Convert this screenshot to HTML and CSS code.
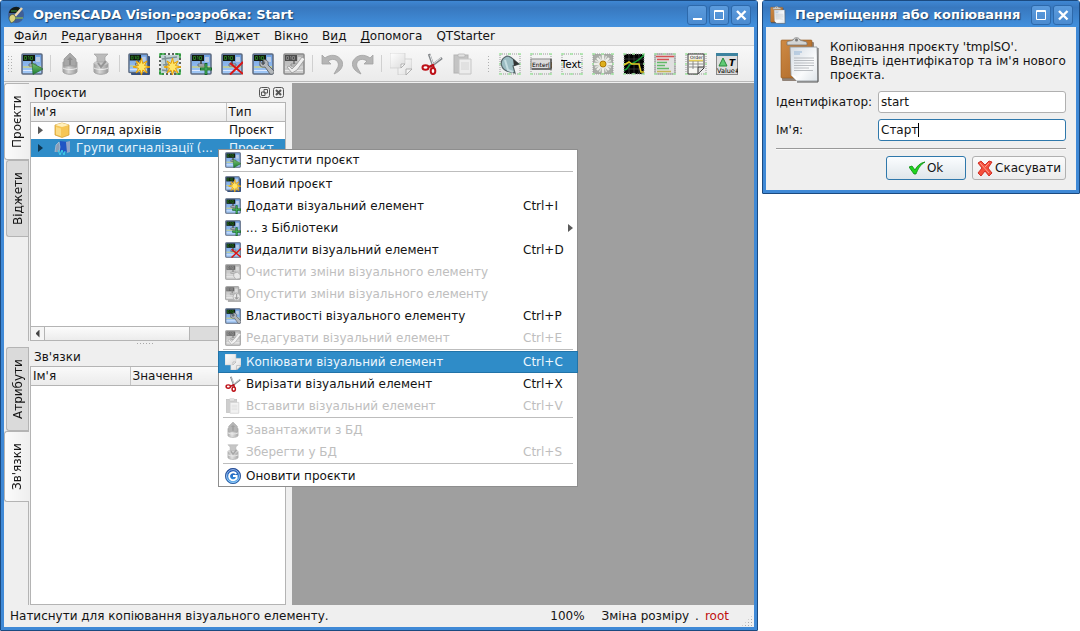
FILE: index.html
```html
<!DOCTYPE html>
<html lang="uk">
<head>
<meta charset="utf-8">
<title>OpenSCADA Vision</title>
<link rel="stylesheet" href="styles.css">
</head>
<body>
<svg class="defs" aria-hidden="true">
  <defs>
    <linearGradient id="g-scr" x1="0" y1="0" x2="0" y2="1"><stop offset="0" stop-color="#6f9fe0"/><stop offset="1" stop-color="#a4cbf8"/></linearGradient>
    <linearGradient id="g-green" x1="0" y1="0" x2="0" y2="1"><stop offset="0" stop-color="#7cc576"/><stop offset="1" stop-color="#1b7d30"/></linearGradient>
    <linearGradient id="g-metal" x1="0" y1="0" x2="1" y2="0"><stop offset="0" stop-color="#858585"/><stop offset=".4" stop-color="#d0d0d0"/><stop offset="1" stop-color="#7c7c7c"/></linearGradient>
    <linearGradient id="g-paper" x1="0" y1="0" x2="1" y2="1"><stop offset="0" stop-color="#fff"/><stop offset="1" stop-color="#dcdcdc"/></linearGradient>
    <linearGradient id="g-sheet" x1="0" y1="0" x2="1" y2="1"><stop offset="0" stop-color="#d3dbe3"/><stop offset=".6" stop-color="#fafbfc"/><stop offset="1" stop-color="#dde3e8"/></linearGradient>
    <linearGradient id="g-board" x1="0" y1="0" x2="1" y2="1"><stop offset="0" stop-color="#cf8a44"/><stop offset="1" stop-color="#a96526"/></linearGradient>
    <linearGradient id="g-blue" x1="0" y1="0" x2="0" y2="1"><stop offset="0" stop-color="#1547a8"/><stop offset="1" stop-color="#3fa4ee"/></linearGradient>
    <symbol id="screen" viewBox="0 0 22 22">
      <rect x="1" y="1" width="20" height="20" rx="1" fill="url(#g-scr)" stroke="#5c6a80" stroke-width="1.500"/>
      <path d="M2 14h18" stroke="#d8d76a" stroke-width="1.2"/>
      <path d="M2 17.500h18" stroke="#dfeaff" stroke-width="1"/>
      <path d="M10 8h2v5h-2z" fill="#555b61"/><path d="M8 11h7v2h-7z" fill="#c8cdd3" stroke="#4b5157" stroke-width=".7"/>
      <path d="M15 4h4v5h-4z" fill="#b9cbe4"/>
      <rect x="2" y="2" width="12" height="6" fill="#10180f"/>
      <path d="M3.500 3.500h2v3h-2zM7 3.500h1v3M9.500 3.500h2v3h-2z" stroke="#2c8a25" fill="none" stroke-width=".8"/>
    </symbol>
    <symbol id="run" viewBox="0 0 22 22"><use href="#screen"/><path d="M11 10l11 6-10 5.500z" fill="url(#g-green)" stroke="#2c6a35" stroke-width=".7"/></symbol>
    <symbol id="star" viewBox="0 0 22 22"><path d="M13.500 5l1.200 5.500L19 8l-2.500 4.500L22 14l-5.500 1.200L19 20l-4.200-3-1.300 5-1.500-5L8 20l2.500-4.800L5 14l5.500-1.500L8 8l4 2.500z" fill="#ffe66a" stroke="#e9a000" stroke-width="1"/></symbol>
    <symbol id="new" viewBox="0 0 22 22"><rect x="3" y="3" width="19" height="19" rx="1" fill="#35507d"/><use href="#screen" width="20.500" height="20.500"/><use href="#star"/></symbol>
    <symbol id="newlib" viewBox="0 0 22 22"><rect x="2" y="2" width="18" height="18" fill="#c3d4d6"/><path d="M3 6l15-2M4 12l14-2M3 17l14 2M6 3l2 16" stroke="#7f9295" stroke-width="1.500"/><rect x="1" y="1" width="20" height="20" fill="none" stroke="#2b332d" stroke-width="1.500" stroke-dasharray="2 2"/><path d="M1 4V1h5M16 1h5v4M1 17v4h4M21 16v5h-4" fill="none" stroke="#2ba43c" stroke-width="1.500"/><use href="#star"/></symbol>
    <symbol id="add" viewBox="0 0 22 22"><use href="#screen"/><path d="M16 10v12M10 16h12" stroke="#17632a" stroke-width="2.800"/><path d="M16 11v10M11 16h10" stroke="#46b75b" stroke-width="1.200"/></symbol>
    <symbol id="del" viewBox="0 0 22 22"><use href="#screen"/><path d="M9 10l13 11M22 9L9 21.500" stroke="#d91616" stroke-width="2"/></symbol>
    <symbol id="prop" viewBox="0 0 22 22"><use href="#screen"/><path d="M8 8c-1 4 1 7 5 6l5 7c2 1 5-1 4-3l-6-6c1-4-2-6-5-5l2 3-2 2z" fill="#b4b8bc" stroke="#5b6065" stroke-width=".9"/></symbol>
    <symbol id="edit" viewBox="0 0 22 22"><use href="#screen"/><path d="M6 13l3 3 4-4 6-8 3 2-8 11-5 3-5-6z" fill="#ededed" stroke="#777" stroke-width=".8"/></symbol>
    <symbol id="clear" viewBox="0 0 22 22"><use href="#screen"/><path d="M12 13l5-2 4 4v5l-6 1-3-4z" fill="#ddd" stroke="#777"/></symbol>
    <symbol id="drop" viewBox="0 0 22 22"><rect x="4" y="4" width="18" height="18" fill="#888"/><use href="#screen" width="20" height="20"/><circle cx="16" cy="15" r="5" fill="#ddd" stroke="#777"/><path d="M16 11v7M13.500 15.500L16 18l2.500-2.500" stroke="#666" fill="none" stroke-width="1.500"/></symbol>
    <symbol id="load" viewBox="0 0 22 22"><path d="M4 9v10c2 3 12 3 14 0V9z" fill="url(#g-metal)" stroke="#8d8d8d"/><path d="M4 15c3 2 11 2 14 0" stroke="#eee" fill="none"/><path d="M11 0l6 6v7H5V6z" fill="#8f8f8f" stroke="#777" stroke-width=".7"/><path d="M11 4l3 3h-2v5h-2V7H8z" fill="#6d6d6d"/></symbol>
    <symbol id="save" viewBox="0 0 22 22"><path d="M4 10v9c2 3 12 3 14 0v-9z" fill="url(#g-metal)" stroke="#8d8d8d"/><path d="M4 15c3 2 11 2 14 0" stroke="#eee" fill="none"/><ellipse cx="11" cy="10" rx="7" ry="2.500" fill="#bcbcbc"/><path d="M4 1h14l-3 3v5H7V4z" fill="#a8a8a8" stroke="#888" stroke-width=".7"/><path d="M8 10l3 4 5-6" fill="none" stroke="#777" stroke-width="2"/></symbol>
    <symbol id="undo" viewBox="0 0 22 22"><path d="M1 2v9h9L7 8c6-4 12 0 10 6l-4 7c7-3 10-8 8-13C17 1 9 1 4 5z" fill="#a2a2a2" stroke="#888" stroke-width=".8"/></symbol>
    <symbol id="copy" viewBox="0 0 22 22"><path d="M8 6h14v10l-6 6H8z" fill="url(#g-paper)" stroke="#c6c6c6" stroke-width=".7"/><path d="M22 16h-6v6z" fill="#f4f4f4" stroke="#a5a5a5" stroke-width=".8"/><path d="M0 0h15v11l-4 4H0z" fill="url(#g-paper)" stroke="#cdcdcd" stroke-width=".7"/><path d="M15 11h-4v4z" fill="#fafafa" stroke="#a5a5a5" stroke-width=".8"/></symbol>
    <symbol id="cut" viewBox="0 0 22 22"><path d="M8 1l4 11M21 5l-12 9" stroke="#85898c" stroke-width="2.500"/><path d="M9 2l3 9M20 5l-8 6" stroke="#e4e6e8" stroke-width="1"/><path d="M8 14l4-2 1 3" fill="none" stroke="#be1018" stroke-width="2"/><ellipse cx="4.500" cy="14.500" rx="3" ry="2.300" fill="#fff" stroke="#bd1118" stroke-width="2"/><ellipse cx="12" cy="18" rx="2.300" ry="3" fill="#fff" stroke="#bd1118" stroke-width="2"/></symbol>
    <symbol id="paste" viewBox="0 0 22 22"><rect x="2" y="2" width="14" height="18" fill="#b5b5b5" stroke="#a0a0a0"/><rect x="6" y="1" width="7" height="3" rx="1" fill="#ddd" stroke="#999" stroke-width=".7"/><path d="M7 6h12v15H7z" fill="#ececec" stroke="#b8b8b8"/><path d="M9 10h8M9 12h8M9 14h8M9 16h8" stroke="#ccc"/></symbol>
    <symbol id="reload" viewBox="0 0 22 22"><circle cx="11" cy="11" r="10.500" fill="url(#g-blue)" stroke="#173e86"/><circle cx="11" cy="11" r="8.800" fill="none" stroke="#cfe2fb"/><path d="M15.500 8A5.500 5.500 0 1 0 16 14v-3h-5" fill="none" stroke="#fff" stroke-width="2.600"/></symbol>
    <symbol id="frame" viewBox="0 0 22 22"><rect x="1" y="1" width="20" height="20" fill="none" stroke="#999" stroke-dasharray="1 1"/><path d="M0 1h3M9 1h3M19 1h3M0 21h3M9 21h3M19 21h3M0 11h2M20 11h2" stroke="#a5e8a5" stroke-width="1.500"/></symbol>
    <symbol id="fig" viewBox="0 0 22 22"><use href="#frame"/><path d="M8 3c5 0 6 4 12 8l-6 2 2 7-5-1C1 17-1 7 8 3z" fill="#9bbcc2" stroke="#526366" stroke-width="1.200"/><path d="M14 6l6 5-5 2z" fill="#333"/><path d="M6 7l3 10 5 2" stroke="#c5dde1" fill="none" stroke-width="2"/></symbol>
    <symbol id="form" viewBox="0 0 22 22"><use href="#frame"/><rect x="1" y="6" width="20" height="10" fill="#dcdcdc" stroke="#888"/><path d="M2 16h19V6" stroke="#555" fill="none" stroke-width="1.500"/><text x="2" y="13.500" font-size="6">Enter[]</text></symbol>
    <symbol id="text" viewBox="0 0 22 22"><use href="#frame"/><text x="0" y="15" font-size="10">Text</text></symbol>
    <symbol id="media" viewBox="0 0 22 22"><rect x="1" y="1" width="20" height="20" fill="#a9aca7"/><use href="#frame"/><g stroke="#eeeeea" stroke-width="2.400"><path d="M11 2v18M2 11h18M5 5l12 12M17 5L5 17"/></g><g stroke="#dfe1dc" stroke-width="1.400"><path d="M7.500 3l7 16M14.500 3l-7 16M3 7.500l16 7M19 7.500l-16 7"/></g><circle cx="11" cy="11" r="3" fill="#deb01b" stroke="#ad7908"/></symbol>
    <symbol id="diag" viewBox="0 0 22 22"><rect x="1" y="1" width="20" height="20" fill="#000"/><path d="M6 1v20M11 1v20M16 1v20M1 6h20M1 11h20M1 16h20" stroke="#444" stroke-width=".7"/><use href="#frame"/><path d="M1 17c4 0 4-5 7-6s6-2 13-9" fill="none" stroke="#159d35" stroke-width="1.500"/><path d="M1 12l5-3 3 2h7l2 8h3" fill="none" stroke="#e2cc24" stroke-width="1.500"/></symbol>
    <symbol id="proto" viewBox="0 0 22 22"><rect x="1" y="1" width="20" height="20" fill="#e0e0e0" stroke="#999"/><use href="#frame"/><path d="M2 3.500h18M3 6.500h12" stroke="#d65252" stroke-width="1.500"/><path d="M3 9.500h10M3 12.500h8M3 15.500h12" stroke="#62b968" stroke-width="1.500"/><path d="M3 18.500h14" stroke="#c8b557" stroke-width="1.500"/></symbol>
    <symbol id="doc" viewBox="0 0 22 22"><use href="#frame"/><path d="M3 1h16v14l-6 6H3z" fill="#f7f7f3" stroke="#333"/><path d="M19 14h-6v7" fill="#ddd" stroke="#333"/><text x="5" y="5.500" font-size="4.500">Order</text><path d="M4 8h14M4 11h14M4 14h9M8 7v9M13 7v7" stroke="#777" stroke-width=".8"/><path d="M4 7.500h14" stroke="#e5cf57" stroke-width="1.500"/></symbol>
    <symbol id="val" viewBox="0 0 22 22"><rect x=".5" y=".5" width="21" height="21" fill="#dedede" stroke="#888"/><path d="M0 1.500h22" stroke="#3d839f" stroke-width="3"/><path d="M7 5l4 8H3z" fill="#5eca74" stroke="#29883d"/><text x="13" y="13" font-size="9" font-weight="bold" font-style="italic">T</text><text x="1" y="20" font-size="6.500">Value#</text></symbol>
    <symbol id="clipboard" viewBox="0 0 40 46">
      <rect x="2" y="5" width="32" height="39" rx="1" fill="#513b28" opacity=".6"/><rect x="1" y="3" width="31" height="38" rx="1" fill="url(#g-board)" stroke="#955a23" stroke-width=".6"/>
      <path d="M7 8V5c0-1 5-1 6-2 1-3 6-3 7 0 1 1 7 1 7 3v2z" fill="#d3d5d5" stroke="#777" stroke-width=".8"/><circle cx="16.500" cy="3" r="1.500" fill="#777"/>
      <path d="M10 10h27l1 34H17l-6-6z" fill="url(#g-sheet)" stroke="#8c9298" stroke-width=".8"/><path d="M38 11v34H17" fill="none" stroke="#555"/><path d="M11 38l5 1 1 5z" fill="#fff"/>
      <path d="M14 15h8M14 17h6" stroke="#92b3d5"/><path d="M14 21h20M14 23.500h20M14 26h20M14 28.500h20M14 31h15M14 33.500h19" stroke="#a9adb2" stroke-width=".8"/>
    </symbol>
  </defs>
</svg>

<div class="desktop">
<main class="window window-main">
  <header class="titlebar">
    <svg class="app-icon" viewBox="0 0 16 16"><circle cx="8" cy="8" r="8" fill="#3f5f96"/><path d="M1 6a7 7 0 0 1 12-4L9 6z" fill="#121a18"/><path d="M3 4h6" stroke="#3c9b37"/><path d="M14 1l-7 8" stroke="#edd7ae" stroke-width="2.500"/><path d="M1 12c0-4 4-6 6-3s-1 6-4 7z" fill="#d9d37e" stroke="#36402a" stroke-width=".6"/><path d="M7 11h8" stroke="#7fa95c" stroke-width="1.500"/></svg>
    <h1>OpenSCADA Vision-розробка: Start</h1>
    <div class="winbtns">
      <button aria-label="Згорнути"><svg viewBox="0 0 18 18"><path d="M5 13h9" stroke-width="2"/></svg></button>
      <button aria-label="Розгорнути"><svg viewBox="0 0 18 18"><path d="M4.500 4.500h9v9h-9zM4.500 5.500h9"/></svg></button>
      <button aria-label="Закрити"><svg viewBox="0 0 18 18"><path d="M5 5l8.500 8.500M13.500 5L5 13.500" stroke-width="2.400"/></svg></button>
    </div>
  </header>
  <nav class="menubar">
    <button><u>Ф</u>айл</button><button><u>Р</u>едагування</button><button><u>П</u>роєкт</button><button><u>В</u>іджет</button><button>Вікн<u>о</u></button><button>В<u>и</u>д</button><button><u>Д</u>опомога</button><button>QTStarter</button>
  </nav>
  <div class="toolbar">
    <span class="handle"></span>
    <button aria-label="Запустити"><svg><use href="#run"/></svg></button>
    <span class="tsep"></span>
    <button aria-label="Завантажити" disabled><svg><use href="#load"/></svg></button>
    <button aria-label="Зберегти" disabled><svg><use href="#save"/></svg></button>
    <span class="tsep"></span>
    <button aria-label="Новий проєкт"><svg><use href="#new"/></svg></button>
    <button aria-label="Нова бібліотека"><svg><use href="#newlib"/></svg></button>
    <button aria-label="Додати"><svg><use href="#add"/></svg></button>
    <button aria-label="Видалити"><svg><use href="#del"/></svg></button>
    <button aria-label="Властивості"><svg><use href="#prop"/></svg></button>
    <button aria-label="Редагувати" disabled><svg><use href="#edit"/></svg></button>
    <span class="tsep"></span>
    <button aria-label="Відмінити" disabled><svg><use href="#undo"/></svg></button>
    <button aria-label="Повторити" disabled><svg class="flip"><use href="#undo"/></svg></button>
    <span class="tsep"></span>
    <button aria-label="Копіювати"><svg><use href="#copy"/></svg></button>
    <button aria-label="Вирізати"><svg><use href="#cut"/></svg></button>
    <button aria-label="Вставити" disabled><svg><use href="#paste"/></svg></button>
    <span class="handle handle-wide"></span>
    <button aria-label="Фігура"><svg><use href="#fig"/></svg></button>
    <button aria-label="Форма"><svg><use href="#form"/></svg></button>
    <button aria-label="Текст"><svg><use href="#text"/></svg></button>
    <button aria-label="Медіа"><svg><use href="#media"/></svg></button>
    <button aria-label="Діаграма"><svg><use href="#diag"/></svg></button>
    <button aria-label="Протокол"><svg><use href="#proto"/></svg></button>
    <button aria-label="Документ"><svg><use href="#doc"/></svg></button>
    <button aria-label="Значення"><svg><use href="#val"/></svg></button>
  </div>
  <div class="work">
    <aside class="side">
      <section class="dock dock-top">
        <div class="tabs"><button class="tab active">Проєкти</button><button class="tab">Віджети</button></div>
        <div class="pane">
          <div class="pane-head"><h2>Проєкти</h2>
            <button aria-label="Відкріпити"><svg viewBox="0 0 11 11"><rect x=".5" y=".5" width="10" height="10" rx="2"/><path d="M5 2.500h3.500V6H5zM2.500 5H6v3.500H2.500z"/></svg></button>
            <button aria-label="Закрити панель"><svg viewBox="0 0 11 11"><rect x=".5" y=".5" width="10" height="10" rx="2"/><path d="M3 3l5 5M8 3L3 8" stroke-width="2"/></svg></button>
          </div>
          <div class="view">
            <table>
              <colgroup><col class="col-name"><col></colgroup>
              <thead><tr><th>Ім'я</th><th>Тип</th></tr></thead>
              <tbody>
                <tr><td><div class="node"><i class="arrow"></i><svg viewBox="0 0 16 16"><path d="M1 3l7-2 7 2v10l-7 2.500L1 13z" fill="#f6c656" stroke="#cf9a2a" stroke-width=".7"/><path d="M1 3l7-2 7 2-7 2z" fill="#fff0bd"/><path d="M2 5l5 1.500V14l-5-1.500z" fill="#fbdc86"/></svg>Огляд архівів</div></td><td>Проєкт</td></tr>
                <tr class="selected"><td><div class="node"><i class="arrow"></i><svg viewBox="0 0 16 16"><path d="M6 1l8 1 1 9-6 2-3-2z" fill="#1f55c4"/><path d="M12 2l4-1v11l-3 1z" fill="#8fa3c8"/><path d="M1 12l1-7 3-3 1 5-1 5" fill="#8b9eb6" stroke="#b4c6da" stroke-width=".7"/><path d="M4 10l2 5 2-5 2 5 1-4" fill="none" stroke="#40d0e9"/></svg>Групи сигналізації (...</div></td><td>Проєкт</td></tr>
              </tbody>
            </table>
            <div class="hscroll"><button aria-label="Ліворуч"><i></i></button><span class="thumb"></span></div>
          </div>
        </div>
      </section>
      <div class="split"></div>
      <section class="dock dock-bottom">
        <div class="tabs"><button class="tab tab-tall">Атрибути</button><button class="tab active tab-short">Зв'язки</button></div>
        <div class="pane">
          <div class="pane-head"><h2>Зв'язки</h2></div>
          <div class="view">
            <table>
              <colgroup><col class="col-link"><col></colgroup>
              <thead><tr><th>Ім'я</th><th>Значення</th></tr></thead>
            </table>
          </div>
        </div>
      </section>
    </aside>
    <div class="canvas"></div>
  </div>
  <footer class="status"><span class="msg">Натиснути для копіювання візуального елементу.</span><span>100%</span><span class="mode">Зміна розміру</span><span>.</span><span class="user">root</span><i class="grip"></i></footer>

  <div class="menu" role="menu">
    <button role="menuitem"><svg><use href="#run"/></svg><span>Запустити проєкт</span></button>
    <hr>
    <button role="menuitem"><svg><use href="#new"/></svg><span>Новий проєкт</span></button>
    <button role="menuitem"><svg><use href="#add"/></svg><span>Додати візуальний елемент</span><kbd>Ctrl+I</kbd></button>
    <button role="menuitem"><svg><use href="#add"/></svg><span>... з Бібліотеки</span><i class="arrow"></i></button>
    <button role="menuitem"><svg><use href="#del"/></svg><span>Видалити візуальний елемент</span><kbd>Ctrl+D</kbd></button>
    <button role="menuitem" disabled><svg><use href="#clear"/></svg><span>Очистити зміни візуального елементу</span></button>
    <button role="menuitem" disabled><svg><use href="#drop"/></svg><span>Опустити зміни візуального елементу</span></button>
    <button role="menuitem"><svg><use href="#prop"/></svg><span>Властивості візуального елементу</span><kbd>Ctrl+P</kbd></button>
    <button role="menuitem" disabled><svg><use href="#edit"/></svg><span>Редагувати візуальний елемент</span><kbd>Ctrl+E</kbd></button>
    <hr>
    <button role="menuitem" class="current"><svg><use href="#copy"/></svg><span>Копіювати візуальний елемент</span><kbd>Ctrl+C</kbd></button>
    <button role="menuitem"><svg><use href="#cut"/></svg><span>Вирізати візуальний елемент</span><kbd>Ctrl+X</kbd></button>
    <button role="menuitem" disabled><svg><use href="#paste"/></svg><span>Вставити візуальний елемент</span><kbd>Ctrl+V</kbd></button>
    <hr>
    <button role="menuitem" disabled><svg><use href="#load"/></svg><span>Завантажити з БД</span></button>
    <button role="menuitem" disabled><svg><use href="#save"/></svg><span>Зберегти у БД</span><kbd>Ctrl+S</kbd></button>
    <hr>
    <button role="menuitem"><svg><use href="#reload"/></svg><span>Оновити проєкти</span></button>
  </div>
</main>

<section class="window window-dialog" role="dialog" aria-labelledby="dlg-title">
  <header class="titlebar">
    <svg class="app-icon"><use href="#clipboard"/></svg>
    <h1 id="dlg-title">Переміщення або копіювання</h1>
    <div class="winbtns">
      <button aria-label="Розгорнути"><svg viewBox="0 0 18 18"><path d="M4.500 4.500h9v9h-9zM4.500 5.500h9"/></svg></button>
      <button aria-label="Закрити"><svg viewBox="0 0 18 18"><path d="M5 5l8.500 8.500M13.500 5L5 13.500" stroke-width="2.400"/></svg></button>
    </div>
  </header>
  <form class="form">
    <div class="intro"><svg><use href="#clipboard"/></svg><p>Копіювання проєкту 'tmplSO'.<br>Введіть ідентифікатор та ім'я нового проєкта.</p></div>
    <div class="fields">
      <label for="ident">Ідентифікатор:</label><div class="field"><input id="ident" type="text" value="start"></div>
      <label for="name">Ім'я:</label><div class="field"><input id="name" class="focused" type="text" value="Старт"><i class="caret"></i></div>
    </div>
    <hr>
    <div class="actions">
      <button type="button" class="default"><svg viewBox="0 0 16 16"><path d="M0 7l3-1 3 4c2-4 5-7 10-8-5 3-7 7-9 12H5z" fill="#1fd51f" stroke="#0b8a12" stroke-width=".8"/></svg>Ok</button>
      <button type="button"><svg viewBox="0 0 16 16"><path d="M1 3l3-2 4 4 4-4 3 1-4 6 4 5-3 3-4-5-4 5-3-3 4-5z" fill="#f4503c" stroke="#cc2318" stroke-width=".9"/><path d="M3 3l9 10M12 3L8 7" stroke="#ff9c8a" fill="none"/></svg>Скасувати</button>
    </div>
  </form>
</section>
</div>
</body>
</html>
```
FILE: styles.css
```css
* { box-sizing: border-box; }
body { margin: 0; background: #fff; color: #141414; font: 12px/16px "DejaVu Sans", sans-serif; }
button { font: inherit; color: inherit; margin: 0; padding: 0; border: 0; background: none; }
h1, h2, p { margin: 0; font-weight: normal; font-size: 12px; }
svg { display: block; flex: none; }
.defs { position: absolute; width: 0; height: 0; }
.desktop { display: flex; align-items: flex-start; gap: 4px; min-height: 100vh; }

.window { border: 1px solid #1b4a80; border-radius: 3px 3px 1px 1px; padding: 0 3px 3px; background: #3f89d6; }
.window-main { position: relative; flex: 1; min-width: 0; min-height: 100vh; display: flex; flex-direction: column; }
.window-dialog { width: 318px; }
.titlebar { display: flex; align-items: center; height: 26px; padding: 2px 6px 0 4px; margin: 0 -3px; background: linear-gradient(#3f87d3, #3878bf 25%, #4290dd); }
.app-icon { width: 16px; height: 18px; margin: 0 9px 0 3px; }
.titlebar h1 { flex: 1; font-size: 13px; font-weight: bold; color: #fff; text-shadow: 1px 1px 1px #1b3c66; white-space: nowrap; }
.winbtns { display: flex; gap: 2px; }
.winbtns button { width: 20px; height: 20px; border: 1px solid #2d69ab; border-radius: 3px; background: linear-gradient(#5b9bdd, #4b8bd0); }
.winbtns svg { width: 18px; height: 18px; fill: none; stroke: #fff; stroke-width: 1; }

.menubar { display: flex; gap: 14px; height: 19px; padding: 0 10px; background: #efefef; border-bottom: 1px solid #d2d2d2; }
.menubar button { height: 18px; }
.menubar u { text-underline-offset: 2px; }
.toolbar { display: flex; align-items: center; height: 36px; background: linear-gradient(#f8f8f8, #ebebeb); border-bottom: 1px solid #b8b8b8; }
.toolbar button { width: 31px; height: 31px; display: grid; place-items: center; }
.toolbar svg { width: 22px; height: 22px; }
.flip { transform: scaleX(-1); }
.toolbar button:disabled svg { filter: grayscale(1); opacity: .75; }
.handle { width: 12px; height: 17px; background: radial-gradient(#b0b0b0 35%, transparent 40%) 0 0 / 3px 3px; background-clip: content-box; padding: 0 3px 0 4px; }
.handle-wide { width: 16px; padding: 0 3px 0 8px; }
.tsep { width: 7px; height: 17px; background: linear-gradient(#d0d0d0, #d0d0d0) center / 1px 100% no-repeat; }

.work { flex: 1; display: flex; padding-top: 1px; background: #efefef; }
.canvas { flex: 1; background: #9f9f9f; }
.side { width: 288px; padding-right: 6px; display: flex; flex-direction: column; }
.dock { display: flex; min-height: 0; }
.dock-top { height: 258px; }
.dock-bottom { flex: 1; }
.split { height: 6px; background: radial-gradient(#a8a8a8 35%, transparent 40%) 0 1px / 3px 3px repeat-x; background-clip: content-box; padding: 1px 131px 2px 133px; }
.tabs { width: 25px; display: flex; flex-direction: column; align-items: flex-end; border-right: 1px solid #b4b4b4; }
.tab { writing-mode: vertical-rl; transform: rotate(180deg); width: 22px; height: 77px; line-height: 20px; text-align: center; border: 1px solid #b4b4b4; border-left: 0; border-radius: 0 3px 3px 0; background: #dadada; }
.tab.active { width: 25px; margin-right: -1px; background: linear-gradient(90deg, #efefef, #fbfbfb); }
.tab-tall { height: 84px; }
.tab-short { height: 71px; }
.pane { flex: 1; min-width: 0; margin-left: 1px; display: flex; flex-direction: column; }
.pane-head { display: flex; align-items: center; gap: 3px; height: 19px; padding: 0 2px 0 4px; }
.pane-head h2 { flex: 1; }
.pane-head svg { width: 11px; height: 11px; fill: none; stroke: #555; }
.view { flex: 1; border: 1px solid #b4b4b4; background: #fff; display: flex; flex-direction: column; justify-content: space-between; }
table { width: 100%; border-collapse: collapse; table-layout: fixed; }
.col-name { width: 195px; }
.col-link { width: 99px; }
th { height: 18px; padding: 0 2px; text-align: left; font-weight: normal; background: linear-gradient(#fafafa, #ebebeb); border-bottom: 1px solid #b4b4b4; }
th + th { border-left: 1px solid #c4c4c4; }
td { height: 18px; padding: 0 3px; white-space: nowrap; overflow: hidden; }
.node { display: flex; align-items: center; gap: 6px; padding-left: 4px; }
.node svg { width: 16px; height: 16px; margin-left: 5px; }
.arrow { width: 5px; height: 8px; background: #5a5a5a; clip-path: polygon(0 0, 100% 50%, 0 100%); }
.selected { background: #2f8cc8; color: #e6f3fb; }
.selected .arrow { background: #0e3550; }
.hscroll { display: flex; height: 14px; border-top: 1px solid #b4b4b4; background: #dcdcdc; }
.hscroll button { width: 14px; display: grid; place-items: center; background: #f5f5f5; border-right: 1px solid #b4b4b4; }
.hscroll i { width: 4px; height: 8px; background: #444; clip-path: polygon(100% 0, 0 50%, 100% 100%); }
.thumb { width: 145px; background: linear-gradient(#fcfcfc, #ececec); border-right: 1px solid #b4b4b4; }

.status { display: flex; align-items: center; gap: 6px; height: 22px; padding: 0 1px 0 6px; background: #efefef; }
.msg { flex: 1; }
.mode { margin-left: 11px; }
.user { color: #c01010; }
.grip { align-self: flex-end; width: 12px; height: 12px; margin-left: 6px; background: radial-gradient(#aaa 35%, transparent 40%) 0 0 / 3px 3px; clip-path: polygon(100% 0, 100% 100%, 0 100%); }

.menu { position: absolute; left: 217px; top: 148px; width: 360px; background: #fff; box-shadow: inset 0 0 0 1px #8e8e8e; }
.menu button { display: flex; align-items: center; gap: 5px; width: 100%; height: 22px; padding-left: 7px; text-align: left; }
.menu svg { width: 16px; height: 16px; }
.menu span { flex: 1; }
.menu kbd { width: 55px; font: inherit; }
.menu .arrow { margin-right: 5px; }
.menu hr { margin: 0 5px; height: 2px; border: 0; border-top: 1px solid #bdbdbd; }
.menu button:disabled { color: #bebebe; }
.menu button:disabled svg { filter: grayscale(1); opacity: .65; }
.menu .current { background: #2f8cc8; color: #eef7fd; box-shadow: inset 0 0 0 1px #2173a8; }

.form { padding: 10px; background: #efefef; }
.intro { display: flex; align-items: center; gap: 10px; padding-left: 4px; line-height: 14px; }
.intro svg { width: 40px; height: 46px; }
.intro p { line-height: 14px; padding-top: 2px; }
.fields { display: grid; grid-template-columns: 96px 1fr; gap: 6px; align-items: center; margin-top: 8px; }
.fields label { white-space: nowrap; }
.field { position: relative; }
.field input { display: block; width: 100%; height: 22px; padding: 0 2px; font: inherit; color: #141414; border: 1px solid #b0b0b0; border-radius: 3px; background: #fff; outline: 0; }
.field .focused { border-color: #2f78ab; }
.caret { position: absolute; left: 40px; top: 4px; width: 1px; height: 14px; background: #000; }
.form hr { margin: 7px 0 6px; height: 2px; border: 0; border-top: 1px solid #999; border-bottom: 1px solid #fafafa; }
.actions { display: flex; justify-content: flex-end; gap: 6px; }
.actions button { display: flex; align-items: center; justify-content: center; gap: 2px; height: 24px; min-width: 80px; padding: 0 4px; border: 1px solid #b0b0b0; border-radius: 3px; background: linear-gradient(#fbfbfb, #ececec); }
.actions svg { width: 16px; height: 16px; }
.actions .default { border-color: #2f78ab; background: linear-gradient(#fbfdff, #dfe6ea); }
```
